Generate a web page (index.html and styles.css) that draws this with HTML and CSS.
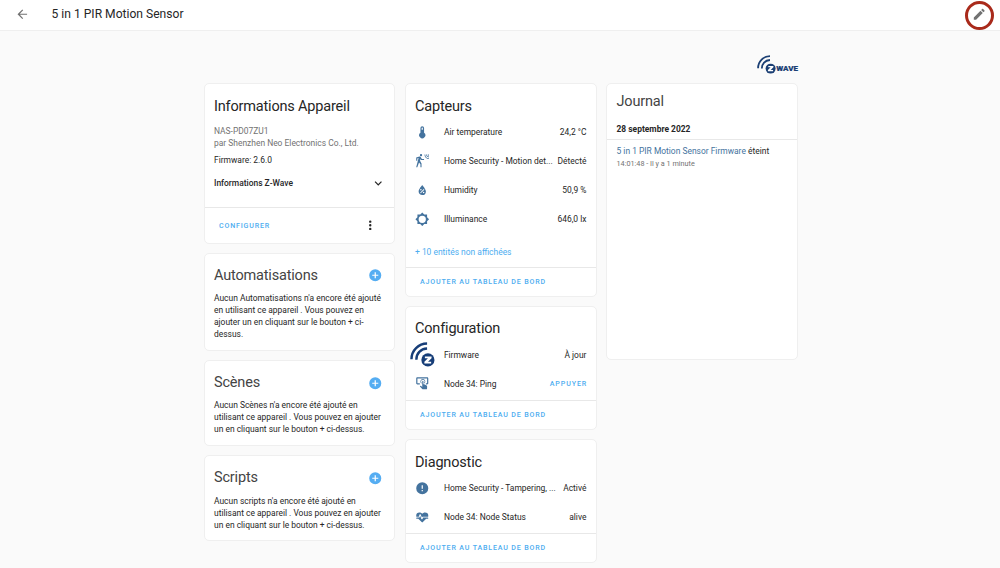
FILE: index.html
```
<!DOCTYPE html>
<html lang="fr">
<head>
<meta charset="utf-8">
<title>5 in 1 PIR Motion Sensor</title>
<link rel="stylesheet" href="styles.css">
</head>
<body>
<svg class="defs" width="0" height="0">
  <symbol id="plus" viewBox="0 0 24 24"><path d="M17,13H13V17H11V13H7V11H11V7H13V11H17M12,2A10,10 0 0,0 2,12A10,10 0 0,0 12,22A10,10 0 0,0 22,12A10,10 0 0,0 12,2Z"/></symbol>
  <symbol id="waves" viewBox="0 0 24 24">
    <g fill="none" stroke="currentColor" stroke-width="2.3"><path d="M1.4 16.6C1.4 8 8.2 1.6 16.4 1.5"/><path d="M6.1 17C6.1 11 10.2 6.6 16.4 6.3"/></g>
    <circle cx="17.2" cy="17.2" r="6.3" fill="currentColor"/><path fill="#fff" d="M14.3 13.9H20.7V15.5L17.3 18.9H20.3V20.6H13.8V19L17.2 15.6H14.3Z"/>
  </symbol>
</svg>
<header class="toolbar">
  <svg class="icon back" viewBox="0 0 24 24"><path d="M20,11V13H8L13.5,18.5L12.08,19.92L4.16,12L12.08,4.08L13.5,5.5L8,11H20Z"/></svg>
  <h1 class="title">5 in 1 PIR Motion Sensor</h1>
  <button class="edit" aria-label="Modifier"><svg class="icon" viewBox="0 0 24 24"><path d="M20.71,7.04C21.1,6.65 21.1,6 20.71,5.63L18.37,3.29C18,2.9 17.35,2.9 16.96,3.29L15.12,5.12L18.87,8.87M3,17.25V21H6.75L17.81,9.93L14.06,6.18L3,17.25Z"/></svg></button>
</header>
<main class="page">
  <div class="brand"><svg class="brand-mark"><use href="#waves"/></svg><span class="brand-name">WAVE</span></div>
  <div class="columns">
    <div class="column column-info">
      <section class="card info">
        <div class="info-body">
          <h2>Informations Appareil</h2>
          <p class="maker">NAS-PD07ZU1<br>par Shenzhen Neo Electronics Co., Ltd.</p>
          <p class="firmware">Firmware: 2.6.0</p>
          <div class="expander"><span>Informations Z-Wave</span><svg class="icon" viewBox="0 0 24 24"><path d="M7.41,8.58L12,13.17L16.59,8.58L18,10L12,16L6,10L7.41,8.58Z"/></svg></div>
        </div>
        <div class="actions"><button class="link">CONFIGURER</button><svg class="icon" viewBox="0 0 24 24"><path d="M12,16A2,2 0 0,1 14,18A2,2 0 0,1 12,20A2,2 0 0,1 10,18A2,2 0 0,1 12,16M12,10A2,2 0 0,1 14,12A2,2 0 0,1 12,14A2,2 0 0,1 10,12A2,2 0 0,1 12,10M12,4A2,2 0 0,1 14,6A2,2 0 0,1 12,8A2,2 0 0,1 10,6A2,2 0 0,1 12,4Z"/></svg></div>
      </section>
      <section class="card empty automations">
        <div class="card-head"><h2>Automatisations</h2><svg class="icon add"><use href="#plus"/></svg></div>
        <p>Aucun Automatisations n'a encore été ajouté<br>en utilisant ce appareil . Vous pouvez en<br>ajouter un en cliquant sur le bouton + ci-<br>dessus.</p>
      </section>
      <section class="card empty scenes">
        <div class="card-head"><h2>Scènes</h2><svg class="icon add"><use href="#plus"/></svg></div>
        <p>Aucun Scènes n'a encore été ajouté en<br>utilisant ce appareil . Vous pouvez en ajouter<br>un en cliquant sur le bouton + ci-dessus.</p>
      </section>
      <section class="card empty scripts">
        <div class="card-head"><h2>Scripts</h2><svg class="icon add"><use href="#plus"/></svg></div>
        <p>Aucun scripts n'a encore été ajouté en<br>utilisant ce appareil . Vous pouvez en ajouter<br>un en cliquant sur le bouton + ci-dessus.</p>
      </section>
    </div>
    <div class="column">
      <section class="card entities sensors">
        <h2>Capteurs</h2>
        <div class="row"><svg class="icon" viewBox="0 0 24 24"><path d="M15 13V5A3 3 0 0 0 9 5V13A5 5 0 1 0 15 13M12 4A1 1 0 0 1 13 5V8H11V5A1 1 0 0 1 12 4Z"/></svg><span class="name">Air temperature</span><span class="value">24,2 °C</span></div>
        <div class="row"><svg class="icon" viewBox="0 0 24 24"><path d="M10,0.2C9,0.2 8.2,1 8.2,2C8.2,3 9,3.8 10,3.8C11,3.8 11.8,3 11.8,2C11.8,1 11,0.2 10,0.2M15.67,1A7.33,7.33 0 0,0 23,8.33V7A6,6 0 0,1 17,1H15.67M18.33,1C18.33,3.58 20.42,5.67 23,5.67V4.33C21.16,4.33 19.67,2.84 19.67,1H18.33M21,1A2,2 0 0,0 23,3V1H21M7.92,4.03C7.75,4.03 7.58,4.06 7.42,4.11L2,5.8V11H3.8V7.33L5.91,6.67L2,22H3.8L6.67,13.89L9,17V22H10.8V15.59L8.31,11.05L9.04,8.18L10.12,10H15V8.2H11.38L9.38,4.87C9.08,4.37 8.54,4.03 7.92,4.03Z"/></svg><span class="name">Home Security - Motion det...</span><span class="value">Détecté</span></div>
        <div class="row"><svg class="icon" viewBox="0 0 24 24"><path fill-rule="evenodd" d="M12,3.25C12,3.25 6,10 6,14C6,17.32 8.69,20 12,20A6,6 0 0,0 18,14C18,10 12,3.25 12,3.25M14.47,9.97L15.53,11.03L9.53,17.03L8.47,15.97M9.75,10A1.25,1.25 0 0,1 9.75,12.5A1.25,1.25 0 0,1 9.75,10M14.25,14.5A1.25,1.25 0 0,1 14.25,17A1.25,1.25 0 0,1 14.25,14.5Z"/></svg><span class="name">Humidity</span><span class="value">50,9 %</span></div>
        <div class="row"><svg class="icon" viewBox="0 0 24 24"><path d="M12,18A6,6 0 0,1 6,12A6,6 0 0,1 12,6A6,6 0 0,1 18,12A6,6 0 0,1 12,18M20,15.31L23.31,12L20,8.69V4H15.31L12,0.69L8.69,4H4V8.69L0.69,12L4,15.31V20H8.69L12,23.31L15.31,20H20V15.31Z"/></svg><span class="name">Illuminance</span><span class="value">646,0 lx</span></div>
        <a class="more">+ 10 entités non affichées</a>
        <div class="actions"><button class="link">AJOUTER AU TABLEAU DE BORD</button></div>
      </section>
      <section class="card entities configuration">
        <h2>Configuration</h2>
        <div class="row"><svg class="icon zwave"><use href="#waves"/></svg><span class="name">Firmware</span><span class="value">À jour</span></div>
        <div class="row"><svg class="icon" viewBox="0 0 24 24"><path d="M13 5C15.21 5 17 6.79 17 9C17 10.5 16.2 11.77 15 12.46V11.24C15.61 10.69 16 9.89 16 9C16 7.34 14.66 6 13 6S10 7.34 10 9C10 9.89 10.39 10.69 11 11.24V12.46C9.8 11.77 9 10.5 9 9C9 6.79 10.79 5 13 5M20 20.5C19.97 21.32 19.32 21.97 18.5 22H13C12.62 22 12.26 21.85 12 21.57L8 17.37L8.74 16.6C8.93 16.39 9.2 16.28 9.5 16.28H9.7L12 18V9C12 8.45 12.45 8 13 8S14 8.45 14 9V13.47L15.21 13.6L19.15 15.79C19.68 16.03 20 16.56 20 17.14V20.5M20 2H4C2.9 2 2 2.9 2 4V12C2 13.11 2.9 14 4 14H8V12L4 12L4 4H20L20 12H18V14H20V13.97L20.04 14C21.13 14 22 13.09 22 12V4C22 2.9 21.11 2 20 2Z"/></svg><span class="name">Node 34: Ping</span><button class="link">APPUYER</button></div>
        <div class="actions"><button class="link">AJOUTER AU TABLEAU DE BORD</button></div>
      </section>
      <section class="card entities diagnostic">
        <h2>Diagnostic</h2>
        <div class="row"><svg class="icon" viewBox="0 0 24 24"><path d="M13,13H11V7H13M13,17H11V15H13M12,2A10,10 0 0,0 2,12A10,10 0 0,0 12,22A10,10 0 0,0 22,12A10,10 0 0,0 12,2Z"/></svg><span class="name">Home Security - Tampering, ...</span><span class="value">Activé</span></div>
        <div class="row"><svg class="icon" viewBox="0 0 24 24"><path d="M7.5,4A5.5,5.5 0 0,0 2,9.5C2,10 2.09,10.5 2.22,11H6.3L7.57,7.63C7.87,6.83 9.05,6.75 9.43,7.63L11.5,13L12.09,11.58C12.22,11.25 12.57,11 13,11H21.78C21.91,10.5 22,10 22,9.5A5.5,5.5 0 0,0 16.5,4C14.64,4 13,4.93 12,6.34C11,4.93 9.36,4 7.5,4V4M3,12.5A1,1 0 0,0 2,13.5A1,1 0 0,0 3,14.5H5.44L11,20C12,20.9 12,20.9 13,20L18.56,14.5H21A1,1 0 0,0 22,13.5A1,1 0 0,0 21,12.5H13.4L12.47,14.8C12.07,15.81 10.92,15.67 10.55,14.83L8.5,9.5L7.54,11.83C7.39,12.21 7.05,12.5 6.6,12.5H3Z"/></svg><span class="name">Node 34: Node Status</span><span class="value">alive</span></div>
        <div class="actions"><button class="link">AJOUTER AU TABLEAU DE BORD</button></div>
      </section>
    </div>
    <div class="column">
      <section class="card journal">
        <h2>Journal</h2>
        <h3>28 septembre 2022</h3>
        <div class="entry"><p><a>5 in 1 PIR Motion Sensor Firmware</a> éteint</p><p class="when">14:01:48 - Il y a 1 minute</p></div>
      </section>
    </div>
  </div>
</main>
</body>
</html>
```
FILE: styles.css
```
* { box-sizing: border-box; margin: 0; padding: 0; }
body { height: 568px; overflow: hidden; background: #fafafa; color: #262626; font: 8.45px/12px Roboto, sans-serif; }
button { border: 0; background: none; font: inherit; }
.defs { position: absolute; }
.icon { width: 14.5px; height: 14.5px; flex: none; display: block; fill: currentColor; }

.toolbar { height: 31px; display: flex; align-items: center; padding: 0 6px 2px 15px; background: #fff; border-bottom: 1px solid #efefef; }
.back { color: #727272; }
.title { margin-left: 22px; flex: 1; font-size: 12.1px; font-weight: 400; line-height: 18px; }
.edit { width: 29px; height: 29px; flex: none; margin-top: 3px; display: grid; place-items: center; border: 3px solid #a92a1b; border-radius: 50%; color: #727272; }
.edit .icon { margin: -2px 0 0 -1px; }

.page { width: 594px; margin-left: 204px; }
.brand { height: 52px; padding-top: 24px; display: flex; justify-content: flex-end; color: #1b3f74; }
.brand-mark { width: 19px; height: 19px; }
.brand-name { margin-left: 0; padding-top: 7.5px; font: 900 8px/12px Roboto, sans-serif; -webkit-text-stroke: .2px; }
.columns { display: grid; grid-template-columns: 192px 192px 192px; column-gap: 9px; align-items: start; }
.column { display: flex; flex-direction: column; gap: 9.5px; }
.column-info { width: 191px; }
.card { display: flex; flex-direction: column; background: #fff; border: 1px solid #efefef; border-radius: 5px; }
h2 { font-size: 14.5px; line-height: 20px; font-weight: 400; letter-spacing: -.18px; }
.link { color: #4dadf0; font-size: 7.1px; font-weight: 500; letter-spacing: .82px; white-space: nowrap; }
.actions { display: flex; align-items: center; justify-content: space-between; border-top: 1px solid #e8e8e8; padding: 0 14px; }

.info { height: 161px; margin-bottom: -1px; }
.info-body { flex: 1; padding: 13px 9px 0; }
.maker { margin-top: 8px; color: #727272; }
.firmware { margin-top: 5px; }
.expander { margin-top: 10px; display: flex; justify-content: space-between; align-items: center; font-weight: 500; }
.info .actions { height: 36px; padding-right: 16.5px; }

.empty { padding: 12px 9px 0; }
.automations { height: 98px; }
.scenes { height: 85.7px; }
.scripts { height: 85.7px; }
.card-head { display: flex; justify-content: space-between; align-items: center; padding-right: 2.5px; }
.card-head h2 { color: #444; }
.add { color: #55adf2; }
.empty p { margin-top: 6.4px; white-space: nowrap; }

.entities h2 { padding: 12.5px 9px 1.2px; }
.configuration h2 { padding-top: 12px; }
.sensors { height: 213.5px; }
.configuration { height: 123.5px; }
.diagnostic { height: 123.5px; }
.row { height: 29px; flex: none; display: flex; align-items: center; padding: 0 9.6px 0 9.4px; white-space: nowrap; }
.row .icon { color: #44739e; }
.name { margin-left: 14px; flex: 1; }
.row .zwave { width: 25px; height: 25px; margin: 0 -5.5px 0 -5px; color: #173e78; }
.row .link { letter-spacing: .9px; margin-right: -.8px; }
.more { margin: 12.3px 9px 0; color: #4dadf0; }
.entities .actions { margin-top: auto; height: 28.5px; }

.journal { height: 277px; }
.journal h2 { padding: 8px 9.5px 0; color: #444; }
h3 { padding: 11px 9.5px 4px; font-size: 8.45px; line-height: 12px; font-weight: 700; border-bottom: 1px solid #e8e8e8; }
.entry { padding: 5px 9.5px; white-space: nowrap; }
.entry a { color: #44739e; }
.when { margin-top: .6px; color: #727272; font-size: 7.25px; }
```
